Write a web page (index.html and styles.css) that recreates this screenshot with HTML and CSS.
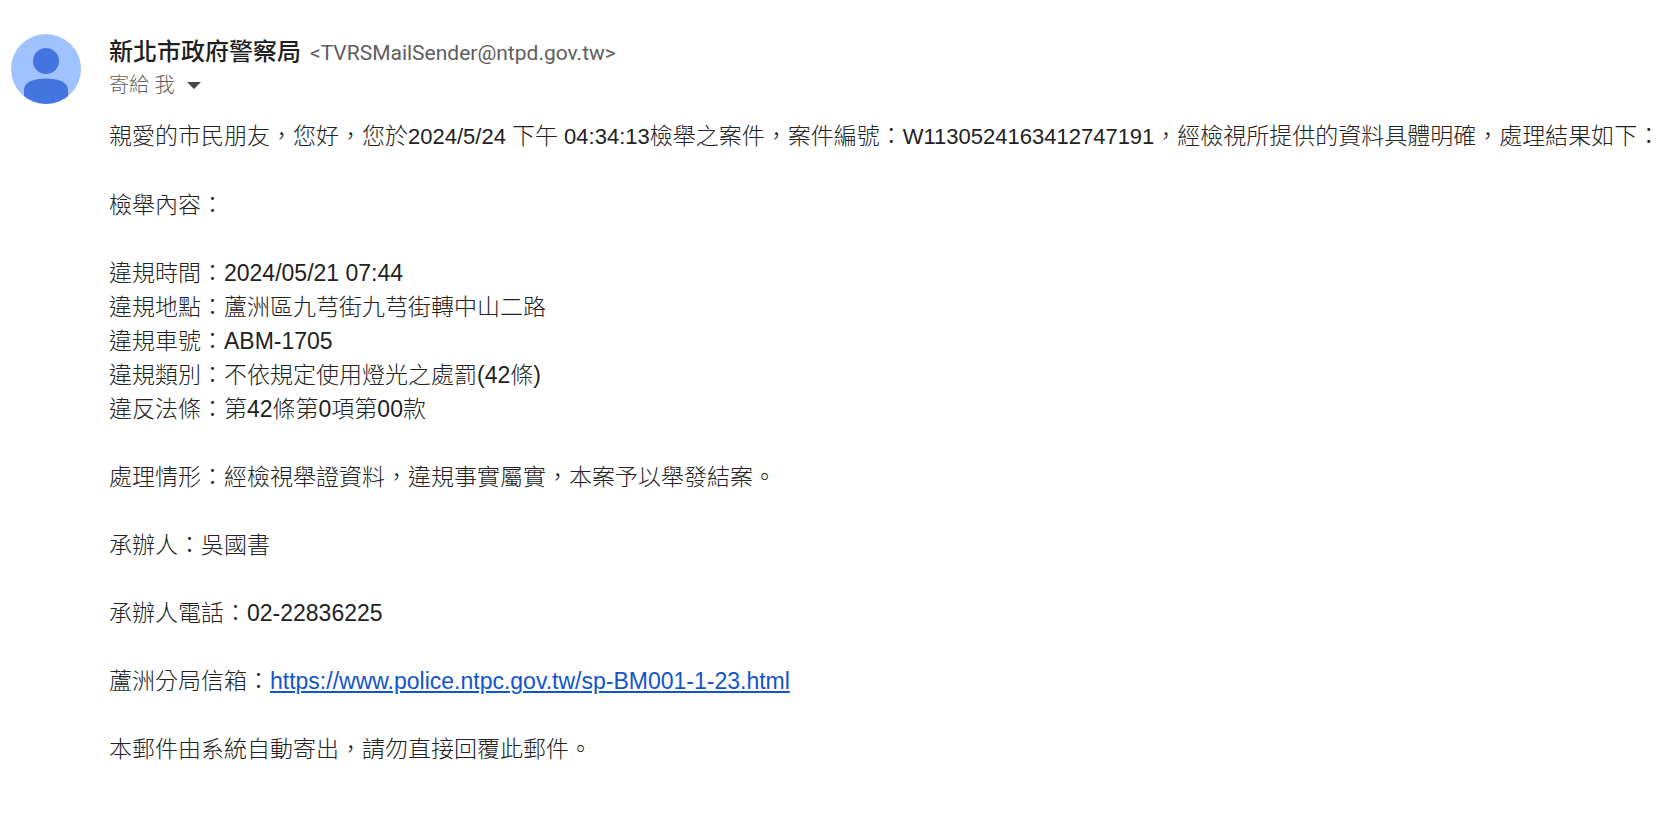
FILE: index.html
```html
<!DOCTYPE html>
<html lang="zh-Hant">
<head>
<meta charset="utf-8">
<title>新北市政府警察局</title>
<link rel="stylesheet" href="styles.css">
</head>
<body>
<article class="message">
  <svg class="avatar" viewBox="0 0 70 70" aria-hidden="true">
    <defs><clipPath id="disc"><circle cx="35" cy="35" r="35"/></clipPath></defs>
    <circle cx="35" cy="35" r="35" fill="#a0c3ff"/>
    <g clip-path="url(#disc)" fill="#4374e0">
      <circle cx="35" cy="27" r="13"/>
      <path d="M13 70V56C13 48 23 44.500 35 44.500S57 48 57 56V70Z"/>
    </g>
  </svg>
  <div class="content">
    <header class="header">
      <div class="sender">
        <h1 class="name">新北市政府警察局</h1>
        <span class="email">&lt;TVRSMailSender@ntpd.gov.tw&gt;</span>
      </div>
      <button class="recipient" type="button">
        <span>寄給 我</span>
        <svg class="caret" viewBox="0 0 14 7" aria-hidden="true"><path d="M0 0H14L7 7Z" fill="#444746"/></svg>
      </button>
    </header>
    <div class="body">
      <p class="intro">親愛的市民朋友，您好，您於<span class="value">2024/5/24 </span>下午<span class="value"> 04:34:13</span>檢舉之案件，案件編號：<span class="value">W1130524163412747191</span>，經檢視所提供的資料具體明確，處理結果如下：</p>
      <p>檢舉內容：</p>
      <p>違規時間：2024/05/21 07:44<br>
      違規地點：蘆洲區九芎街九芎街轉中山二路<br>
      違規車號：ABM-1705<br>
      違規類別：不依規定使用燈光之處罰(42條)<br>
      違反法條：第42條第0項第00款</p>
      <p>處理情形：經檢視舉證資料，違規事實屬實，本案予以舉發結案。</p>
      <p>承辦人：吳國書</p>
      <p>承辦人電話：02-22836225</p>
      <p>蘆洲分局信箱：<a class="link" href="https://www.police.ntpc.gov.tw/sp-BM001-1-23.html">https://www.police.ntpc.gov.tw/sp-BM001-1-23.html</a></p>
      <p>本郵件由系統自動寄出，請勿直接回覆此郵件。</p>
    </div>
  </div>
</article>
</body>
</html>
```
FILE: styles.css
```css
body {
  margin: 0;
  background: #fff;
  color: #222;
  font-family: "Liberation Sans", "Noto Sans CJK TC", sans-serif;
}

.message {
  display: flex;
  gap: 28px;
  padding: 34px 0 48px 11px;
}

.avatar {
  flex: none;
  width: 70px;
  height: 70px;
}

.content {
  flex: 1;
  min-width: 0;
}

.header {
  display: flex;
  flex-direction: column;
  align-items: flex-start;
}

.sender {
  display: flex;
  align-items: baseline;
  gap: 9px;
  height: 32px;
}

.name {
  margin: 0;
  color: #1f1f1f;
  font-size: 24px;
  line-height: 32px;
  font-weight: 500;
  font-family: "Noto Sans CJK TC", sans-serif;
}

.email {
  color: #5e5e5e;
  font-family: Roboto, sans-serif;
  font-size: 21px;
  line-height: 32px;
}

.recipient {
  display: flex;
  align-items: center;
  gap: 12px;
  padding: 0;
  border: 0;
  background: none;
  color: #5e5e5e;
  font-family: "Liberation Sans", "Noto Sans CJK TC", sans-serif;
  font-size: 20px;
  font-weight: 300;
  line-height: 38px;
}

.caret {
  width: 14px;
  height: 7px;
}

.body {
  padding-top: 15px;
  font-size: 23px;
  font-weight: 300;
  line-height: 34px;
}

.body p {
  margin: 0 0 34px;
}

.value {
  font-size: 22px;
}

.link {
  color: #1155cc;
}
```
